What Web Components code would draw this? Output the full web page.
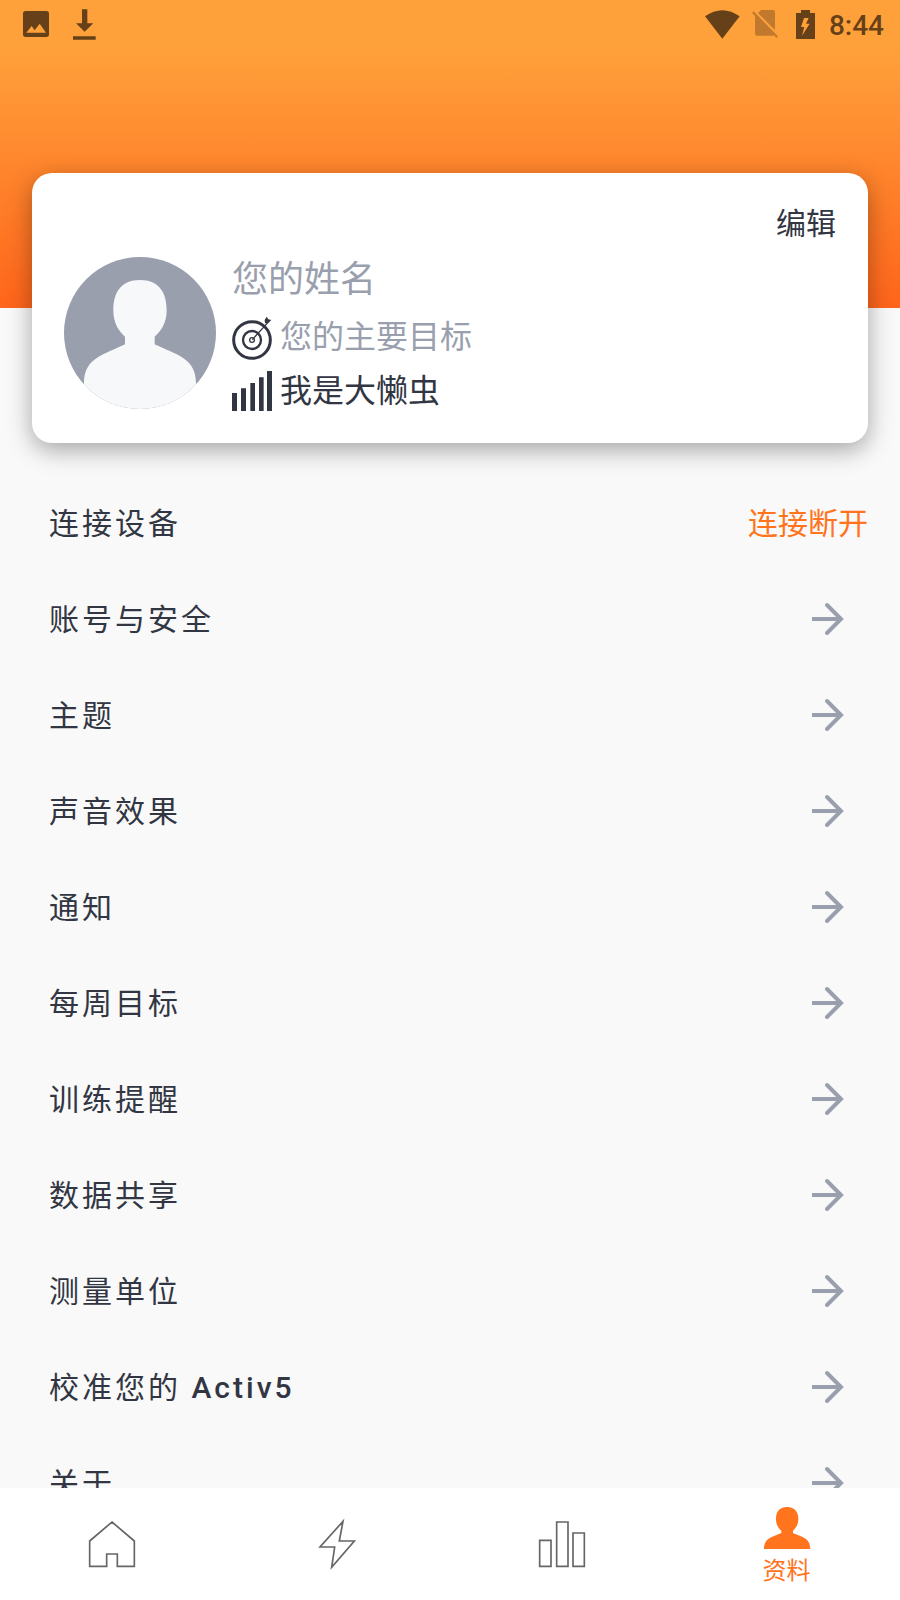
<!DOCTYPE html>
<html lang="zh-CN">
<head>
<meta charset="utf-8">
<meta name="viewport" content="width=device-width, initial-scale=1">
<title>资料</title>
<style>
  body {
    margin: 0;
    --ink: #323643;
    --muted: #9a9fae;
    --accent: #ff741c;
    --page: #f9f9f9;
    color: var(--ink);
    font-family: Roboto, "Noto Sans CJK SC", sans-serif;
  }
</style>
</head>
<body>
<profile-screen></profile-screen>

<script>
const define = (name, html, setup) => {
  const template = document.createElement('template');
  template.innerHTML = html;
  customElements.define(name, class extends HTMLElement {
    constructor() {
      super();
      this.attachShadow({ mode: 'open' }).append(template.content.cloneNode(true));
    }
    connectedCallback() {
      if (setup) setup(this, this.shadowRoot);
    }
  });
};

/* Icons: [width, height, viewBox, markup] */
const ICONS = {
  image: [26, 26, '0 0 78 78', '<path fill="currentColor" fill-rule="evenodd" d="M8 0H70Q78 0 78 8V70Q78 78 70 78H8Q0 78 0 70V8Q0 0 8 0ZM10 65H69L50 38L35 58L26 45Z"/>'],
  download: [23, 31, '0 0 69 93', '<path fill="currentColor" d="M27 1H43V43H61L35 68L9 43H27ZM0 82H68V92H0Z"/>'],
  wifi: [35, 29, '0 0 105 87', '<path fill="currentColor" d="M0 19Q52 -18 104 19L52 86Z"/>'],
  nosim: [26, 28, '0 0 78 84', '<path fill="currentColor" d="M18 9L27 0H63Q69 0 69 6V60ZM0 9L5 4L78 79L73 84L66 76Q65 77 63 77H15Q9 77 9 71V18Z"/>'],
  battery: [19, 29, '0 0 57 87', '<path fill="currentColor" fill-rule="evenodd" d="M15 0H42V9H57V87H0V9H15ZM24 24L15 51H25L18 77L41 41H30L38 24Z"/>'],
  avatar: [152, 152, '0 0 456 456', '<defs><clipPath id="c"><circle cx="228" cy="228" r="228"/></clipPath></defs><circle cx="228" cy="228" r="228" fill="#9a9fae"/><path clip-path="url(#c)" fill="#f7f8fa" d="M228 69C286 69 308 108 308 160C308 197 292 222 272 239V262C334 293 396 302 396 378V456H60V378C60 302 122 293 183 262V239C163 222 148 197 148 160C148 108 170 69 228 69Z"/>'],
  target: [40, 44, '0 -4 120 132', '<g fill="none" stroke="currentColor"><circle cx="60" cy="71" r="55" stroke-width="9"/><circle cx="60" cy="71" r="27" stroke-width="7"/><circle cx="60" cy="71" r="7" stroke-width="4"/><path stroke-width="4" d="M61 70L108 18"/></g><path fill="currentColor" d="M98 11L104 1L109 9L118 11L109 20L99 21Z"/>'],
  level: [40, 40, '0 0 120 120', '<path fill="currentColor" d="M0 66H15V120H0ZM27 52H42V120H27ZM55 36H69V120H55ZM81 19H95V120H81ZM105 0H120V120H105Z"/>'],
  arrow: [32, 32, '0 1 32 32', '<g fill="none" stroke="currentColor" stroke-width="4"><path d="M0 16H28"/><path stroke-linecap="round" d="M15 2L29 16L15 30"/></g>'],
  home: [48, 48, '0 0 144 144', '<path fill="none" stroke="currentColor" stroke-width="5" d="M72 6L139 63V139H88V102H56V139H5V63Z"/>'],
  bolt: [48, 48, '0 0 144 144', '<path fill="none" stroke="currentColor" stroke-width="5" d="M90 4L79 63H124L56 142L65 81H21Z"/>'],
  chart: [48, 48, '0 0 144 144', '<path fill="none" stroke="currentColor" stroke-width="5" d="M5 61H39V139H5ZM56 6H90V139H56ZM105 39H139V139H105Z"/>'],
  person: [48, 42, '0 0 144 126', '<path fill="currentColor" d="M72 0C96 0 106 15 106 36C106 53 98 64 90 71V78C115 90 142 92 142 126H3C3 92 30 90 55 78V71C46 64 39 53 39 36C39 15 48 0 72 0Z"/>'],
};

define('app-icon', `<style>:host{display:block;flex:none}svg{display:block;overflow:visible}</style>`, (host, root) => {
  const [w, h, box, body] = ICONS[host.getAttribute('name')];
  root.innerHTML += `<svg width="${w}" height="${h}" viewBox="${box}" aria-hidden="true">${body}</svg>`;
});

define('status-bar', `
<style>
  :host { display: flex; align-items: center; justify-content: space-between;
    height: 48px; padding: 0 16px 0 23px; color: #664018; }
  div { display: flex; align-items: center; }
  .left { gap: 24px; }
  .right { gap: 14px; }
  .dim { color: #c17a2d; margin: 0 4px 0 -2px; }
  time { font-size: 28px; line-height: 36px; padding-top: 4px; font-weight: 500; }
</style>
<div class="left"><app-icon name="image"></app-icon><app-icon name="download"></app-icon></div>
<div class="right">
  <app-icon name="wifi"></app-icon>
  <app-icon name="nosim" class="dim"></app-icon>
  <app-icon name="battery"></app-icon>
  <time>8:44</time>
</div>`);

define('profile-line', `
<style>
  :host { display: flex; align-items: center; gap: 8px; font-size: 32px; line-height: 40px; }
</style>
<slot name="icon"></slot><slot></slot>`);

define('profile-card', `
<style>
  :host { display: block; position: relative; margin: -135px 32px 0; padding: 29px 32px 32px;
    background: #fff; border-radius: 20px; box-shadow: 0 7px 24px rgba(0,0,0,.34); }
  button { display: block; margin: 0 0 11px auto; padding: 0; border: 0; background: none;
    font: inherit; color: inherit; font-size: 30px; line-height: 44px; }
  .body { display: flex; gap: 16px; }
  .info { display: flex; flex-direction: column; gap: 12px; }
  h1 { margin: 0; font-size: 36px; line-height: 46px; font-weight: 400; }
  .hint { color: var(--muted); }
</style>
<button type="button">编辑</button>
<div class="body">
  <app-icon name="avatar"></app-icon>
  <div class="info">
    <h1 class="hint">您的姓名</h1>
    <profile-line><app-icon slot="icon" name="target"></app-icon><span class="hint">您的主要目标</span></profile-line>
    <profile-line><app-icon slot="icon" name="level"></app-icon>我是大懒虫</profile-line>
  </div>
</div>`);

define('setting-row', `
<style>
  :host { display: block; }
  button { display: flex; align-items: center; justify-content: space-between; width: 100%;
    height: 96px; padding: 0 56px 0 49px; border: 0; background: none; font: inherit;
    color: inherit; font-size: 30px; line-height: 44px; text-align: left; }
  .label { letter-spacing: 3px; }
  ::slotted(b) { font-weight: 500; }
  app-icon { color: var(--muted); }
  .state { color: var(--accent); }
  :host([state]) button { padding-right: 32px; }
  :host([state]) app-icon { display: none; }
</style>
<button type="button"><span class="label"><slot></slot></span><span class="state"></span><app-icon name="arrow"></app-icon></button>`,
(host, root) => {
  const state = root.querySelector('.state');
  if (host.hasAttribute('state')) state.textContent = host.getAttribute('state');
  else state.remove();
});

define('tab-item', `
<style>
  :host { display: block; flex: 1; }
  a { display: flex; flex-direction: column; align-items: center; justify-content: center;
    box-sizing: border-box; gap: 6px; height: 112px; padding-right: 2px; color: #666;
    text-decoration: none; font-size: 24px; line-height: 32px; }
  :host([active]) a { padding-top: 6px; color: var(--accent); }
</style>
<a href="#"><slot></slot></a>`,
(host, root) => {
  const icon = document.createElement('app-icon');
  icon.setAttribute('name', host.getAttribute('icon'));
  const link = root.querySelector('a');
  link.prepend(icon);
  link.setAttribute('aria-label', host.getAttribute('label'));
  if (host.hasAttribute('active')) link.setAttribute('aria-current', 'page');
});

define('profile-screen', `
<style>
  :host { display: flex; flex-direction: column; height: 100vh; background: var(--page); }
  main { flex: 1; min-height: 0; display: flex; flex-direction: column; }
  .banner { flex: none; height: 308px; background: linear-gradient(#ffa13b 48px, #ff651b); }
  profile-card { flex: none; }
  .list { flex: 1; min-height: 0; margin-top: 33px; overflow-y: auto; scrollbar-width: none; }
  nav { flex: none; display: flex; background: #fff; }
</style>
<main>
  <div class="banner"><status-bar></status-bar></div>
  <profile-card></profile-card>
  <div class="list">
    <setting-row state="连接断开">连接设备</setting-row>
    <setting-row>账号与安全</setting-row>
    <setting-row>主题</setting-row>
    <setting-row>声音效果</setting-row>
    <setting-row>通知</setting-row>
    <setting-row>每周目标</setting-row>
    <setting-row>训练提醒</setting-row>
    <setting-row>数据共享</setting-row>
    <setting-row>测量单位</setting-row>
    <setting-row>校准您的 <b>Activ5</b></setting-row>
    <setting-row>关于</setting-row>
  </div>
</main>
<nav>
  <tab-item icon="home" label="首页"></tab-item>
  <tab-item icon="bolt" label="训练"></tab-item>
  <tab-item icon="chart" label="统计"></tab-item>
  <tab-item icon="person" label="资料" active>资料</tab-item>
</nav>`);
</script>
</body>
</html>
